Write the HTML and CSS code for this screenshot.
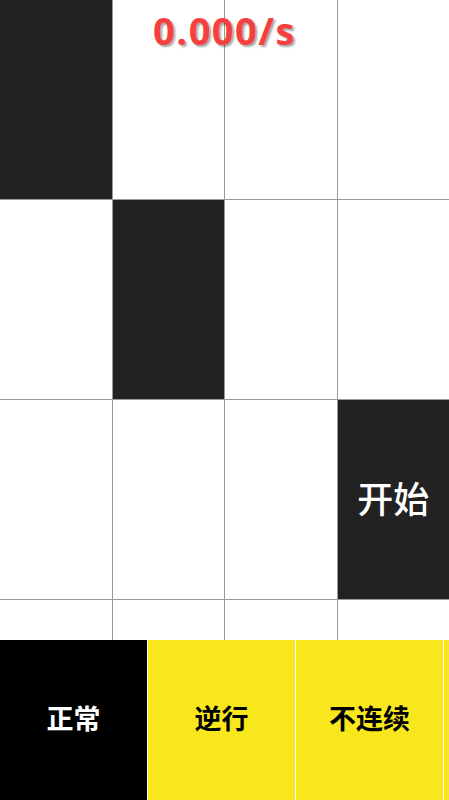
FILE: index.html
```html
<!DOCTYPE html>
<html lang="zh">
<head>
<meta charset="utf-8">
<link rel="stylesheet" href="styles.css">
</head>
<body>
<div class="app">
  <div class="board">
    <div class="tile black"></div>
    <div class="tile"></div>
    <div class="tile"></div>
    <div class="tile"></div>
    <div class="tile"></div>
    <div class="tile black"></div>
    <div class="tile"></div>
    <div class="tile"></div>
    <div class="tile"></div>
    <div class="tile"></div>
    <div class="tile"></div>
    <div class="tile black start">开始</div>
    <div class="tile"></div>
    <div class="tile"></div>
    <div class="tile"></div>
    <div class="tile"></div>
    <div class="timer">0.000/s</div>
  </div>
  <div class="modes">
    <div class="mode active">正常</div>
    <div class="mode">逆行</div>
    <div class="mode">不连续</div>
    <div class="mode"></div>
  </div>
</div>
</body>
</html>
```
FILE: styles.css
```css
html, body {
  margin: 0;
  padding: 0;
  background: #ffffff;
}
.app {
  width: 449px;
  height: 800px;
  display: flex;
  flex-direction: column;
  overflow: hidden;
  font-family: "Noto Sans CJK SC", "Noto Sans", sans-serif;
}
.board {
  position: relative;
  height: 640px;
  flex-shrink: 0;
  display: grid;
  grid-template-columns: repeat(4, 1fr);
  grid-template-rows: 199px 199px 199px 199px;
  gap: 1px;
  background: #999999;
  overflow: hidden;
}
.tile {
  background: #ffffff;
}
.tile.black {
  background: #222222;
}
.start {
  display: flex;
  align-items: center;
  justify-content: center;
  padding-bottom: 6px;
  color: #ffffff;
  font-size: 36px;
  font-weight: 500;
}
.timer {
  position: absolute;
  top: 5px;
  left: 0;
  right: 0;
  text-align: center;
  font-family: "Open Sans", sans-serif;
  font-weight: 700;
  font-size: 38px;
  line-height: 50px;
  letter-spacing: 1.5px;
  color: #f63f3f;
  text-shadow: 2px 2px 2px rgba(0,0,0,0.35);
}
.modes {
  height: 160px;
  display: flex;
  gap: 1px;
  background: #ffffff;
}
.mode {
  width: 147px;
  flex-shrink: 0;
  background: #f8e71c;
  color: #000000;
  display: flex;
  align-items: center;
  justify-content: center;
  padding-bottom: 5px;
  box-sizing: border-box;
  font-size: 27px;
  font-weight: 700;
}
.mode.active {
  background: #000000;
  color: #ffffff;
}
```
